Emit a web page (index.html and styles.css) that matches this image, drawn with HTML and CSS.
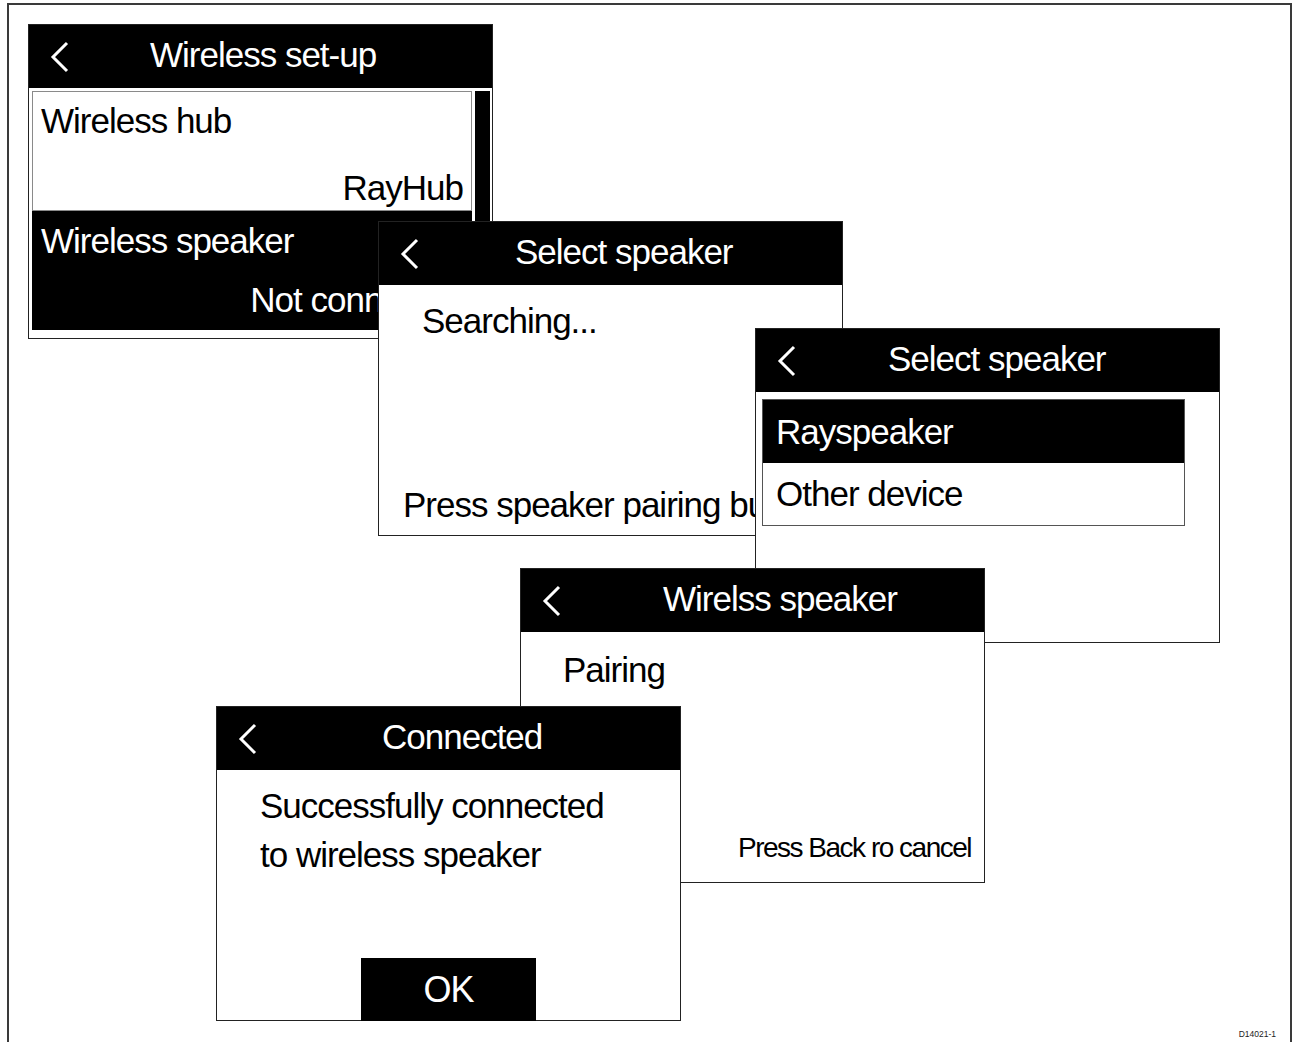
FILE: index.html
```html
<!DOCTYPE html>
<html lang="en">
<head>
  <meta charset="UTF-8" />
  <meta name="viewport" content="width=device-width, initial-scale=1.0" />
  <title>Wireless speaker set-up</title>
  <link rel="stylesheet" href="styles.css">
</head>
<body>
  <div class="sheet">

    <section class="screen screen-setup">
      <header class="screen-head">
        <svg class="back" viewBox="0 0 20 32"><path d="M17 2 L3 16 L17 30" /></svg>
        <h2 class="title title-setup">Wireless set-up</h2>
      </header>
      <div class="screen-body menu-body">
        <ul class="menu">
          <li class="menu-item">
            <span>Wireless hub</span>
            <span class="value">RayHub</span>
          </li>
          <li class="menu-item active">
            <span>Wireless speaker</span>
            <span class="value">Not connected</span>
          </li>
        </ul>
        <div class="scrollbar"></div>
      </div>
    </section>

    <section class="screen screen-search">
      <header class="screen-head">
        <svg class="back" viewBox="0 0 20 32"><path d="M17 2 L3 16 L17 30" /></svg>
        <h2 class="title title-search">Select speaker</h2>
      </header>
      <div class="screen-body search-body">
        <span class="searching">Searching...</span>
        <span>Press speaker pairing button</span>
      </div>
    </section>

    <section class="screen screen-select">
      <header class="screen-head">
        <svg class="back" viewBox="0 0 20 32"><path d="M17 2 L3 16 L17 30" /></svg>
        <h2 class="title title-select">Select speaker</h2>
      </header>
      <div class="screen-body select-body">
        <ul class="choices">
          <li class="choice active">Rayspeaker</li>
          <li class="choice">Other device</li>
        </ul>
      </div>
    </section>

    <section class="screen screen-pairing">
      <header class="screen-head">
        <svg class="back" viewBox="0 0 20 32"><path d="M17 2 L3 16 L17 30" /></svg>
        <h2 class="title title-pairing">Wirelss speaker</h2>
      </header>
      <div class="screen-body pairing-body">
        <span>Pairing</span>
        <span class="hint">Press Back ro cancel</span>
      </div>
    </section>

    <section class="screen screen-done">
      <header class="screen-head">
        <svg class="back" viewBox="0 0 20 32"><path d="M17 2 L3 16 L17 30" /></svg>
        <h2 class="title title-done">Connected</h2>
      </header>
      <div class="screen-body done-body">
        <p class="message">Successfully connected<br>to wireless speaker</p>
        <button class="ok">OK</button>
      </div>
    </section>

    <span class="drawing-ref">D14021-1</span>
  </div>
</body>
</html>
```

FILE: styles.css
```css
* {
  box-sizing: border-box;
}

html, body {
  margin: 0;
  background: #fff;
}

body {
  overflow: hidden;
  font-family: "Liberation Sans", Arial, sans-serif;
  color: #000;
}

/* drawing frame, open at the bottom edge */
.sheet {
  position: relative;
  margin: 3px 0 0 7px;
  width: 1285px;
  height: 1039px;
  border: 2px solid #3a3a3a;
  border-bottom: 0;
}

/* each screen sits on the drawing at its own spot */
.screen {
  position: absolute;
  width: 465px;
  height: 315px;
  border: 1px solid #222;
  background: #fff;
  display: flex;
  flex-direction: column;
}

.screen-setup   { left: 19px;  top: 19px; }
.screen-search  { left: 369px; top: 216px; }
.screen-select  { left: 746px; top: 323px; }
.screen-pairing { left: 511px; top: 563px; }
.screen-done    { left: 207px; top: 701px; }

.screen-head {
  flex: none;
  height: 63px;
  background: #000;
  color: #fff;
  display: flex;
  align-items: center;
  padding-left: 21px;
}

.back {
  flex: none;
  width: 20px;
  height: 32px;
  fill: none;
  stroke: #fff;
  stroke-width: 3;
}

.title {
  margin: 0 0 3px;
  font-size: 35px;
  font-weight: normal;
  line-height: 40px;
  letter-spacing: -1px;
  white-space: nowrap;
}

.title-setup   { margin-left: 80px; }
.title-search  { margin-left: 95px; }
.title-select  { margin-left: 91px; }
.title-pairing { margin-left: 101px; }
.title-done    { margin-left: 124px; }

.screen-body {
  flex: 1;
  display: flex;
  font-size: 35px;
  line-height: 40px;
  letter-spacing: -1px;
  white-space: nowrap;
}

/* wireless set-up menu */
.menu-body {
  padding: 3px 2px 0 3px;
  gap: 3px;
  align-items: flex-start;
}

.menu {
  width: 440px;
  margin: 0;
  padding: 0;
  list-style: none;
}

.menu-item {
  height: 120px;
  border: 1px solid #8a8a8a;
  padding: 9px 8px 2px;
  display: flex;
  flex-direction: column;
  justify-content: space-between;
}

.menu-item.active {
  height: 119px;
  padding-bottom: 9px;
  background: #000;
  border-color: #000;
  color: #fff;
}

.value {
  align-self: flex-end;
}

.scrollbar {
  width: 15px;
  height: 130px;
  background: #000;
}

/* searching */
.search-body {
  flex-direction: column;
  justify-content: space-between;
  padding: 16px 0 10px 24px;
}

.searching {
  margin-left: 19px;
}

/* speaker list */
.select-body {
  padding: 7px 0 0 6px;
}

.choices {
  width: 423px;
  margin: 0;
  padding: 0;
  list-style: none;
  border: 1px solid #555;
  align-self: flex-start;
}

.choice {
  height: 62px;
  padding-left: 13px;
  display: flex;
  align-items: center;
}

.choice.active {
  height: 63px;
  background: #000;
  color: #fff;
}

/* pairing */
.pairing-body {
  flex-direction: column;
  justify-content: space-between;
  padding: 18px 13px 18px 42px;
}

.hint {
  align-self: flex-end;
  font-size: 28px;
  line-height: 32px;
  letter-spacing: -1.5px;
}

/* connected */
.done-body {
  flex-direction: column;
  padding-top: 11px;
}

.message {
  margin: 0 0 0 43px;
  line-height: 49px;
}

.ok {
  margin: auto 0 -1px;
  align-self: center;
  width: 175px;
  height: 63px;
  border: none;
  background: #000;
  color: #fff;
  font-family: inherit;
  font-size: 36px;
  letter-spacing: -1px;
  padding: 0;
}

.drawing-ref {
  position: absolute;
  right: 14px;
  top: 1024px;
  font-size: 8.5px;
  line-height: 10px;
  color: #222;
}
```
